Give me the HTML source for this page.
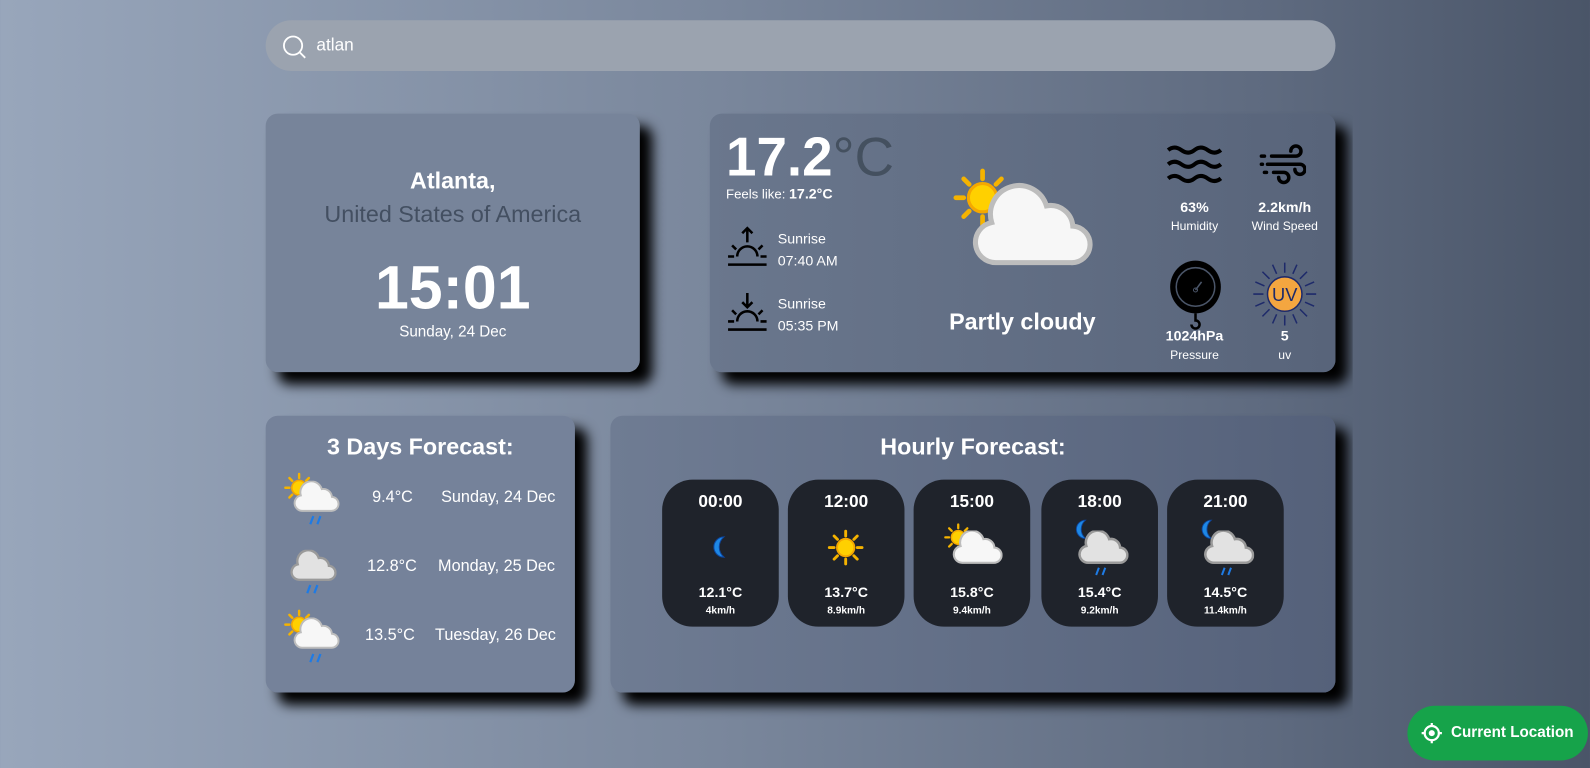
<!DOCTYPE html>
<html><head><meta charset="utf-8"><style>
*{margin:0;padding:0;box-sizing:border-box}
body{width:1590px;height:767px;overflow:hidden;font-family:"Liberation Sans",Arial,sans-serif;color:#fff;background:linear-gradient(90deg,#98a6bb 0%,#7a879c 45%,#5e6a7f 80%,#4a5568 100%);position:relative}
#wrap{position:absolute;left:0;top:0;width:1568px;height:757px;transform:scale(1.014);transform-origin:0 0}
#clip{position:absolute;left:0;top:0;width:1334px;height:757px;overflow:hidden}
.abs{position:absolute}
.card{position:absolute;border-radius:12px;box-shadow:12px 12px 12px #000}
.c{text-align:center}
.hr{position:absolute;top:473px;width:115px;height:145px;background:#1f232b;border-radius:30px;text-align:center}
.hr .t{font-weight:bold;font-size:17px;margin-top:12px}
.hr .d{font-weight:bold;font-size:14px;position:absolute;top:103px;width:100%}
.hr .w{font-weight:bold;font-size:10px;position:absolute;top:124px;width:100%}
.hr svg{position:absolute}
</style></head><body>
<svg width="0" height="0" style="position:absolute"><defs>
<symbol id="sun" viewBox="0 0 40 40"><g stroke="#f5b300" stroke-width="3" stroke-linecap="round"><path d="M20 3v5M20 32v5M3 20h5M32 20h5M8 8l3.5 3.5M28.5 28.5L32 32M8 32l3.5-3.5M28.5 11.5L32 8"/></g><circle cx="20" cy="20" r="9" fill="#ffd000" stroke="#f5a800" stroke-width="2"/></symbol>
<symbol id="cloud" viewBox="0 0 60 40"><path d="M12 38a10 10 0 0 1-2-19.8A14 14 0 0 1 37 10a11 11 0 0 1 13 10a9 9 0 0 1-1 18z" fill="#f7f7f7" stroke="#bdbdbd" stroke-width="2.5"/></symbol>
<symbol id="gcloud" viewBox="0 0 60 40"><path d="M12 38a10 10 0 0 1-2-19.8A14 14 0 0 1 37 10a11 11 0 0 1 13 10a9 9 0 0 1-1 18z" fill="#e2e2e2" stroke="#9a9a9a" stroke-width="3"/></symbol>
<symbol id="moon" viewBox="0 0 20 24"><path d="M15 2A10 10 0 0 0 15 22A13 13 0 0 1 15 2z" fill="#1e88e5" stroke="#0d47a1" stroke-width="1"/></symbol>
<symbol id="rain" viewBox="0 0 14 10"><path d="M5 1L2 9M12 1L9 9" stroke="#1e7be5" stroke-width="2.2"/></symbol>
</defs></svg>
<div id="wrap">
<div id="clip">
<div class="abs" style="left:262px;top:20px;width:1055px;height:50px;border-radius:25px;background:#9ba3af"></div>
<svg class="abs" style="left:277px;top:33px" width="26" height="26" viewBox="0 0 26 26"><circle cx="12" cy="12" r="9" fill="none" stroke="#fff" stroke-width="1.8"/><path d="M18.5 18.5L24 24" stroke="#fff" stroke-width="1.8"/></svg>
<div class="abs" style="left:312px;top:35px;font-size:17px">atlan</div>

<div class="card" style="left:262px;top:112px;width:369px;height:255px;background:#77849a">
<div class="c" style="margin-top:53px;font-weight:bold;font-size:23px">Atlanta,</div>
<div class="c" style="font-size:23px;color:#434f61;margin-top:6px">United States of America</div>
<div class="c" style="font-weight:bold;font-size:60px;margin-top:24px;line-height:70px">15:01</div>
<div class="c" style="font-size:15px;margin-top:0">Sunday, 24 Dec</div>
</div>

<div class="card" style="left:700px;top:112px;width:617px;height:255px;background:linear-gradient(90deg,#6a778d,#58647a)">
<div class="abs" style="left:16px;top:14px;font-size:54px;font-weight:bold;line-height:58px">17.2<span style="font-weight:normal;color:#44505f">°C</span></div>
<div class="abs" style="left:16px;top:71px;font-size:13px">Feels like: <b style="font-size:14px">17.2°C</b></div>
<svg class="abs" style="left:16px;top:111px" width="42" height="42" viewBox="0 0 42 42"><g stroke="#000" stroke-width="2.5" fill="none"><path d="M21 2v14M16 7l5-5 5 5"/><path d="M11 30a10 10 0 0 1 20 0"/><path d="M2 30h6M34 30h6M6 19l4 4M36 19l-4 4M2 38h38"/></g></svg>
<div class="abs" style="left:67px;top:112px;font-size:14px;line-height:22px">Sunrise<br>07:40 AM</div>
<svg class="abs" style="left:16px;top:175px" width="42" height="42" viewBox="0 0 42 42"><g stroke="#000" stroke-width="2.5" fill="none"><path d="M21 2v14M16 11l5 5 5-5"/><path d="M11 30a10 10 0 0 1 20 0"/><path d="M2 30h6M34 30h6M6 19l4 4M36 19l-4 4M2 38h38"/></g></svg>
<div class="abs" style="left:67px;top:176px;font-size:14px;line-height:22px">Sunrise<br>05:35 PM</div>
<svg class="abs" style="left:238px;top:52px" width="62" height="62"><use href="#sun"/></svg>
<svg class="abs" style="left:258px;top:68px" width="120" height="86"><use href="#cloud"/></svg>
<div class="abs" style="left:236px;top:192px;font-size:23px;font-weight:bold">Partly cloudy</div>
<svg class="abs" style="left:450px;top:30px" width="56" height="40" viewBox="0 0 56 40"><g stroke="#000" stroke-width="4" fill="none"><path d="M2 6q6-5 13 0t13 0 13 0 13 0M2 20q6-5 13 0t13 0 13 0 13 0M2 34q6-5 13 0t13 0 13 0 13 0"/></g></svg>
<svg class="abs" style="left:542px;top:28px" width="46" height="46" viewBox="0 0 46 46"><g stroke="#000" stroke-width="3.5" fill="none" stroke-linecap="round"><path d="M12 14h24a5 5 0 1 0-5-5M8 22h32a5 5 0 1 1-5 5M14 30h10a5 5 0 1 1-5 5"/><path d="M2 14h3M2 22h1M5 30h2"/></g></svg>
<div class="abs c" style="left:440px;top:84px;width:76px;font-size:14px;font-weight:bold">63%</div>
<div class="abs c" style="left:440px;top:104px;width:76px;font-size:12px">Humidity</div>
<div class="abs c" style="left:527px;top:84px;width:80px;font-size:14px;font-weight:bold">2.2km/h</div>
<div class="abs c" style="left:527px;top:104px;width:80px;font-size:12px">Wind Speed</div>
<svg class="abs" style="left:452px;top:144px" width="54" height="72" viewBox="0 0 54 72"><ellipse cx="27" cy="27" rx="25" ry="26" fill="#000"/><circle cx="27" cy="27" r="19" fill="none" stroke="#4a5568" stroke-width="1.5"/><path d="M27 30l6-8" stroke="#4a5568" stroke-width="1.5"/><circle cx="27" cy="30" r="2" fill="none" stroke="#4a5568"/><path d="M27 53v7a4 4 0 1 1-4 4" stroke="#000" stroke-width="2.5" fill="none"/></svg>
<svg class="abs" style="left:534px;top:145px" width="66" height="66" viewBox="0 0 66 66"><g stroke="#1e2a6a" stroke-width="1.5"><path d="M33 2v10M33 54v10M2 33h10M54 33h10M11 11l7 7M48 48l7 7M11 55l7-7M48 18l7-7M21 4l4 9M41 53l4 9M4 21l9 4M53 41l9 4M45 4l-4 9M25 53l-4 9M62 21l-9 4M13 41l-9 4"/></g><circle cx="33" cy="33" r="17" fill="#f4a640" stroke="#1e2a6a" stroke-width="1.5"/><text x="33" y="40" text-anchor="middle" font-size="18" fill="#1e2a6a" font-family="Liberation Sans">UV</text></svg>
<div class="abs c" style="left:440px;top:211px;width:76px;font-size:14px;font-weight:bold">1024hPa</div>
<div class="abs c" style="left:440px;top:231px;width:76px;font-size:12px">Pressure</div>
<div class="abs c" style="left:527px;top:211px;width:80px;font-size:14px;font-weight:bold">5</div>
<div class="abs c" style="left:527px;top:231px;width:80px;font-size:12px">uv</div>
</div>

<div class="card" style="left:262px;top:410px;width:305px;height:273px;background:#75829a">
<div class="c" style="margin-top:17px;font-size:23px;font-weight:bold">3 Days Forecast:</div>
<svg class="abs" style="left:17px;top:55px" width="32" height="32"><use href="#sun"/></svg>
<svg class="abs" style="left:27px;top:64px" width="46" height="32"><use href="#cloud"/></svg>
<svg class="abs" style="left:42px;top:98px" width="14" height="10"><use href="#rain"/></svg>
<div class="abs" style="left:105px;top:72px;font-size:16px">9.4°C</div>
<div class="abs" style="left:173px;top:72px;font-size:16px">Sunday, 24 Dec</div>
<svg class="abs" style="left:24px;top:132px" width="46" height="32"><use href="#gcloud"/></svg>
<svg class="abs" style="left:39px;top:166px" width="14" height="10"><use href="#rain"/></svg>
<div class="abs" style="left:100px;top:140px;font-size:16px">12.8°C</div>
<div class="abs" style="left:170px;top:140px;font-size:16px">Monday, 25 Dec</div>
<svg class="abs" style="left:17px;top:190px" width="32" height="32"><use href="#sun"/></svg>
<svg class="abs" style="left:27px;top:199px" width="46" height="32"><use href="#cloud"/></svg>
<svg class="abs" style="left:42px;top:234px" width="14" height="10"><use href="#rain"/></svg>
<div class="abs" style="left:98px;top:208px;font-size:16px">13.5°C</div>
<div class="abs" style="left:167px;top:208px;font-size:16px">Tuesday, 26 Dec</div>
</div>

<div class="card" style="left:602px;top:410px;width:715px;height:273px;background:linear-gradient(90deg,#6f7c93,#55617a)">
<div class="c" style="margin-top:17px;font-size:23px;font-weight:bold">Hourly Forecast:</div>
</div>

<div class="hr" style="left:653px"><div class="t">00:00</div><svg style="left:46px;top:54px" width="20" height="25"><use href="#moon"/></svg><div class="d">12.1°C</div><div class="w">4km/h</div></div>
<div class="hr" style="left:777px"><div class="t">12:00</div><svg style="left:38px;top:48px" width="38" height="38"><use href="#sun"/></svg><div class="d">13.7°C</div><div class="w">8.9km/h</div></div>
<div class="hr" style="left:901px"><div class="t">15:00</div><svg style="left:29px;top:42px" width="30" height="30"><use href="#sun"/></svg><svg style="left:38px;top:50px" width="50" height="34"><use href="#cloud"/></svg><div class="d">15.8°C</div><div class="w">9.4km/h</div></div>
<div class="hr" style="left:1027px"><div class="t">18:00</div><svg style="left:30px;top:38px" width="18" height="22"><use href="#moon"/></svg><svg style="left:36px;top:50px" width="50" height="34"><use href="#gcloud"/></svg><svg style="left:52px;top:86px" width="13" height="9"><use href="#rain"/></svg><div class="d">15.4°C</div><div class="w">9.2km/h</div></div>
<div class="hr" style="left:1151px"><div class="t">21:00</div><svg style="left:30px;top:38px" width="18" height="22"><use href="#moon"/></svg><svg style="left:36px;top:50px" width="50" height="34"><use href="#gcloud"/></svg><svg style="left:52px;top:86px" width="13" height="9"><use href="#rain"/></svg><div class="d">14.5°C</div><div class="w">11.4km/h</div></div>
</div>

<div class="abs" style="left:1388px;top:696px;width:178px;height:54px;border-radius:27px;background:#16a34a"></div>
<svg class="abs" style="left:1401px;top:712px" width="22" height="22" viewBox="0 0 22 22"><g stroke="#fff" stroke-width="2.2" fill="none"><circle cx="11" cy="11" r="7"/><path d="M11 1v4M11 17v4M1 11h4M17 11h4"/></g><circle cx="11" cy="11" r="3" fill="#fff"/></svg>
<div class="abs" style="left:1431px;top:714px;font-size:15px;font-weight:bold">Current Location</div>
</div>
</body></html>
